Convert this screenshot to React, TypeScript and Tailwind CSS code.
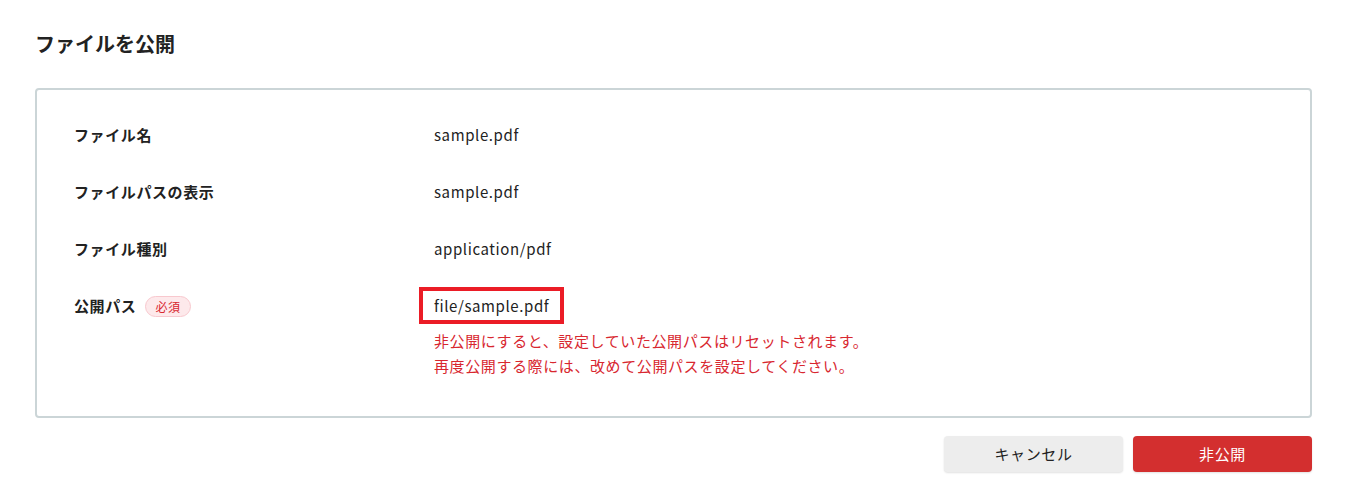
const font = { fontFamily: "'Noto Sans CJK JP', 'Noto Sans', sans-serif" };

const rows = [
  { label: "ファイル名", value: "sample.pdf" },
  { label: "ファイルパスの表示", value: "sample.pdf" },
  { label: "ファイル種別", value: "application/pdf" },
];

export default function App() {
  return (
    <div className="w-[1346px] h-[504px] bg-white pl-[35px] pr-[34px] pt-[30px] text-[#222]" style={font}>
      <h1 className="text-[20px] leading-[28px] font-bold mb-[30px]">ファイルを公開</h1>

      <div className="border-2 border-[#cbd5d7] rounded-[4px] pl-[37px] pt-[33px] pb-[38px] tracking-[0.6px]">
        <div className="flex flex-col gap-[33px]">
          {rows.map((r) => (
            <div key={r.label} className="flex text-[15px] leading-[24px]">
              <div className="w-[360px] font-bold">{r.label}</div>
              <div>{r.value}</div>
            </div>
          ))}
          <div className="flex text-[15px] leading-[24px]">
            <div className="w-[360px] flex items-center gap-[9px] h-[24px]">
              <span className="font-bold">公開パス</span>
              <span className="text-[12px] leading-[19px] px-[9px] rounded-full bg-[#fde9eb] border border-[#f8c8ce] text-[#d8272f]">
                必須
              </span>
            </div>
            <div>
              <div className="relative inline-block">
                <span>file/sample.pdf</span>
                <span className="absolute left-[-15px] right-[-15px] top-[-7px] bottom-[-6px] border-4 border-[#eb1c26]" />
              </div>
              <div className="mt-[10px] text-[#d8272f] leading-[25px]">
                <p>非公開にすると、設定していた公開パスはリセットされます。</p>
                <p>再度公開する際には、改めて公開パスを設定してください。</p>
              </div>
            </div>
          </div>
        </div>
      </div>

      <div className="flex justify-end gap-[10px] mt-[18px]">
        <button className="w-[179px] h-[36px] rounded-[4px] bg-[#ededed] shadow-[0_1px_2px_rgba(0,0,0,0.12)] text-[15px] tracking-[0.6px] text-[#222]">
          キャンセル
        </button>
        <button className="w-[179px] h-[36px] rounded-[4px] bg-[#d32f2f] shadow-[0_1px_2px_rgba(0,0,0,0.12)] text-[15px] tracking-[0.6px] text-white">
          非公開
        </button>
      </div>
    </div>
  );
}
